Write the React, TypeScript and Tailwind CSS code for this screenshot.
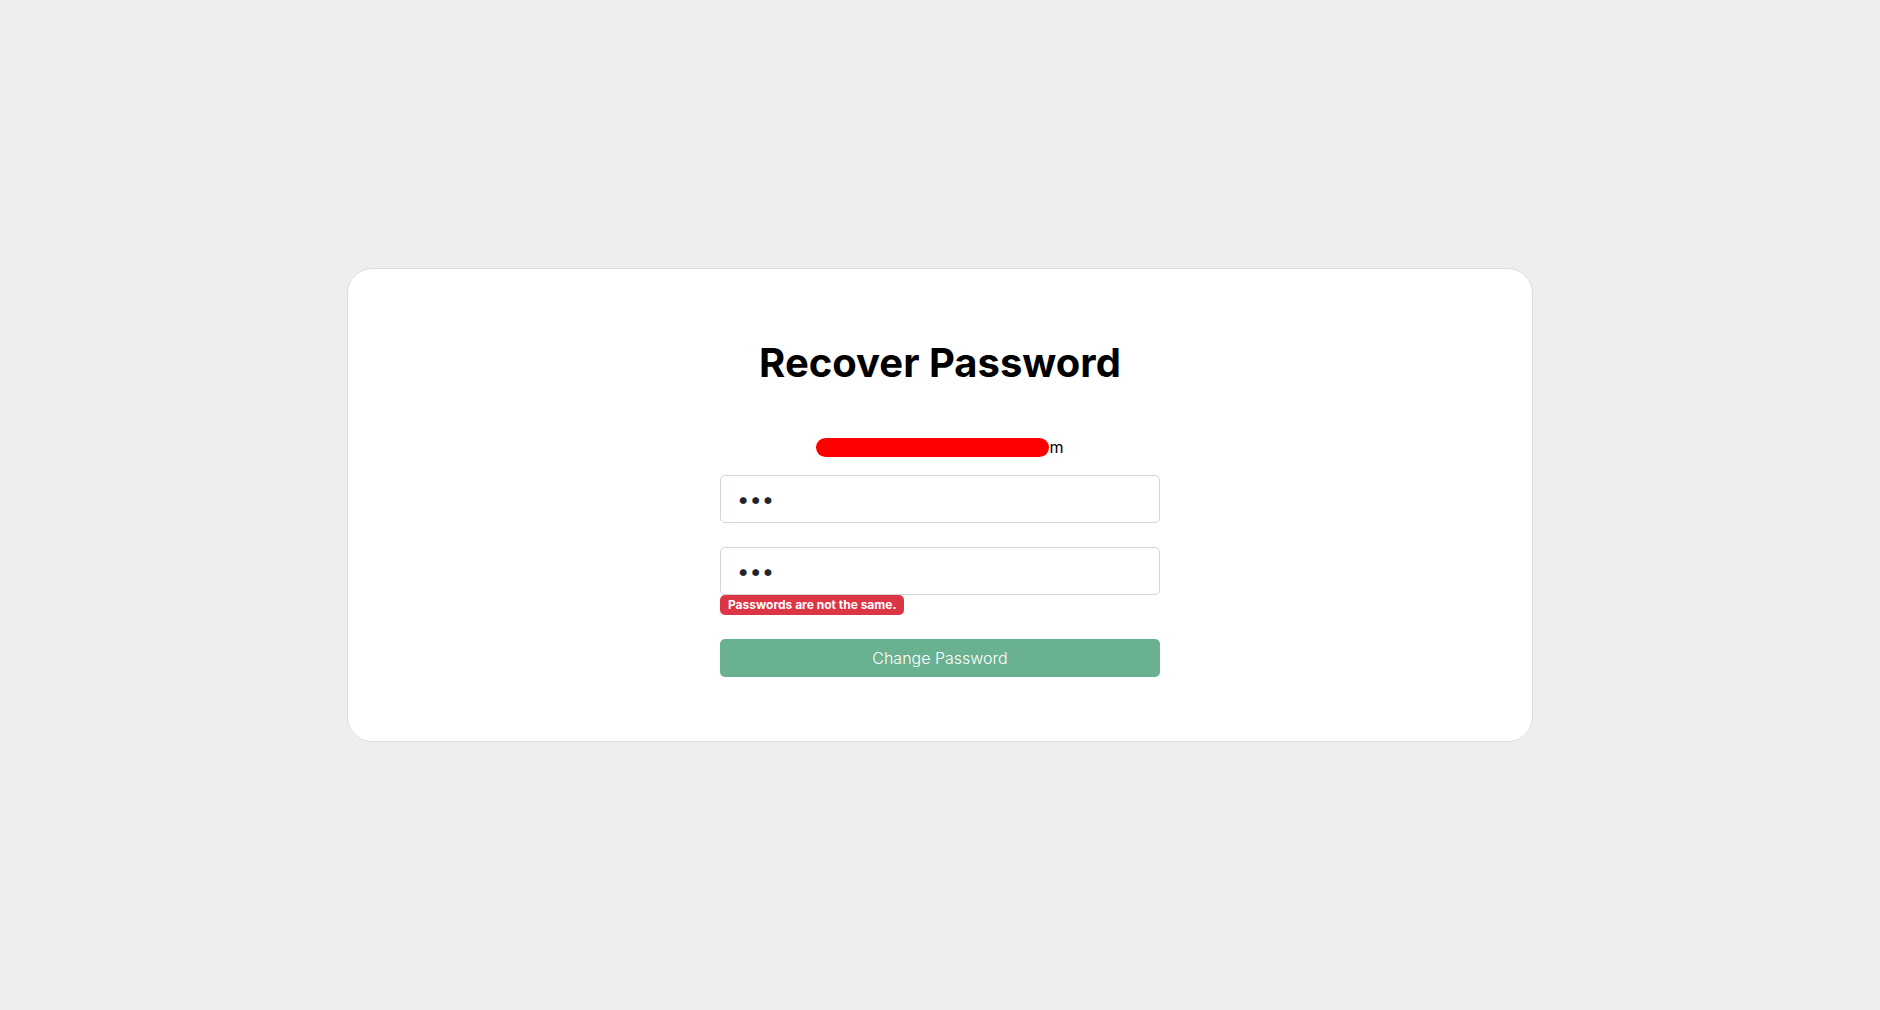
import { useState } from 'react'

export default function App() {
  const [password, setPassword] = useState('abc')
  const [confirm, setConfirm] = useState('abd')
  const mismatch = password !== confirm

  return (
    <div className="min-h-screen bg-[#eeeeee] flex items-center justify-center font-['Inter',sans-serif]">
      <div className="w-[1186px] rounded-[25px] border border-[#dcdcdc] bg-white pt-[70px] pb-[64px] flex flex-col items-center">
        <h1 className="text-[40px] leading-[48px] font-bold text-black">Recover Password</h1>

        {/* redacted email */}
        <div className="mt-[48px] h-6 flex items-center text-base text-black">
          <span className="w-[233px] h-[19px] rounded-full bg-[#ff0000] mt-[1px]" />
          <span>m</span>
        </div>

        <form className="mt-4 w-[440px] flex flex-col" onSubmit={(e) => e.preventDefault()}>
          <input
            type="password"
            value={password}
            onChange={(e) => setPassword(e.target.value)}
            className="h-12 w-full rounded-[5px] border border-[#d1d5db] bg-white px-4 text-[22px] text-[#212529] outline-none"
          />
          <div className="mt-6 flex flex-col items-start">
            <input
              type="password"
              value={confirm}
              onChange={(e) => setConfirm(e.target.value)}
              className="h-12 w-full rounded-[5px] border border-[#d1d5db] bg-white px-4 text-[22px] text-[#212529] outline-none"
            />
            {mismatch && (
              <span className="h-5 flex items-center rounded-[5px] bg-[#dc3545] px-2 text-[12px] font-bold text-white">
                Passwords are not the same.
              </span>
            )}
          </div>
          <button
            type="submit"
            disabled={mismatch}
            className="mt-6 h-[38px] w-full rounded-[5px] bg-[#69b190] text-base font-light text-white"
          >
            Change Password
          </button>
        </form>
      </div>
    </div>
  )
}
